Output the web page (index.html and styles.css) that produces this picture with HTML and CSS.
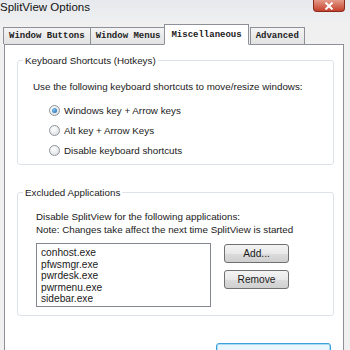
FILE: index.html
```html
<!DOCTYPE html>
<html lang="en">
<head>
  <meta charset="UTF-8">
  <title>SplitView Options</title>
  <link rel="stylesheet" href="styles.css">
</head>
<body>

  <div class="titlebar">
    <span class="title">SplitView Options</span>
    <span class="close">
      <svg width="10" height="8" viewBox="0 0 10 8"><path d="M1.5 0.5 L8.5 7.5 M8.5 0.5 L1.5 7.5" stroke="#fff" stroke-width="2"/></svg>
    </span>
  </div>

  <div class="tabs">
    <div class="tab">Window Buttons</div>
    <div class="tab">Window Menus</div>
    <div class="tab active">Miscellaneous</div>
    <div class="tab">Advanced</div>
  </div>

  <div class="panel">
    <fieldset class="group group-keys">
      <legend>Keyboard Shortcuts (Hotkeys)</legend>
      <p class="intro">Use the following keyboard shortcuts to move/resize windows:</p>
      <div class="radio checked"><span class="dot"></span>Windows key + Arrow keys</div>
      <div class="radio"><span class="dot"></span>Alt key + Arrow Keys</div>
      <div class="radio"><span class="dot"></span>Disable keyboard shortcuts</div>
    </fieldset>

    <fieldset class="group group-apps">
      <legend>Excluded Applications</legend>
      <p class="intro">Disable SplitView for the following applications:<br>
        Note: Changes take affect the next time SplitView is started</p>
      <div class="apps">
        <ul class="listbox">
          <li>conhost.exe</li>
          <li>pfwsmgr.exe</li>
          <li>pwrdesk.exe</li>
          <li>pwrmenu.exe</li>
          <li>sidebar.exe</li>
        </ul>
        <div class="buttons">
          <button class="btn">Add...</button>
          <button class="btn">Remove</button>
        </div>
      </div>
    </fieldset>

    <div class="footer">
      <button class="btn btn-focus"></button>
    </div>
  </div>

</body>
</html>
```

FILE: styles.css
```css
body {
  margin: 0;
  background: #f0f0f0;
  font-family: "Liberation Sans", Arial, sans-serif;
  font-size: 9.8px;
  color: #1a1a1a;
  height: 350px;
  overflow: hidden;
}

.titlebar {
  height: 24px;
  display: flex;
  justify-content: space-between;
  align-items: flex-start;
  background: linear-gradient(#e6e9ee, #f0f0f0);
}

.title {
  font-size: 11.5px;
  margin-top: 1px;
  color: #111;
}

.close {
  width: 32px;
  height: 12px;
  margin-right: 5px;
  background: linear-gradient(#e59a8a, #c5422d);
  border: 1px solid #8a2a1c;
  border-top: none;
  border-radius: 0 0 4px 4px;
  display: flex;
  justify-content: center;
  align-items: flex-end;
  padding-bottom: 1px;
  box-sizing: border-box;
}

.tabs {
  display: flex;
  align-items: flex-end;
  padding-left: 3px;
  height: 20px;
  position: relative;
  z-index: 1;
}

.tab {
  font-family: "Liberation Mono", "Courier New", monospace;
  font-weight: bold;
  font-size: 9px;
  height: 16px;
  line-height: 17px;
  padding: 0 5px;
  border: 1px solid #8e9098;
  border-bottom: none;
  margin-right: -1px;
  background: linear-gradient(#f4f4f4, #e2e2e2);
  color: #222;
}

.tab.active {
  height: 19px;
  line-height: 20px;
  background: #fff;
  margin: 0 1px -1px -1px;
  padding: 0 6px;
  border-bottom: 1px solid #fff;
}

.panel {
  background: #fff;
  border: 1px solid #8e9098;
  margin: 0 4px 0 4px;
  width: 340px;
  box-sizing: border-box;
  height: 320px;
  padding: 10px 9px 0 12px;
}

.group {
  margin: 0;
  border: 1px solid #dde3e8;
  border-radius: 3px;
  padding: 0 0 0 15px;
}

.group legend {
  padding: 0 2px;
  margin-left: -10px;
  color: #1a1a1a;
}

.group-keys {
  height: 108px;
}

.group-apps {
  margin-top: 22px;
  height: 127px;
}

.intro {
  margin: 14px 0 7px;
  line-height: 13px;
}

.group-apps .intro {
  margin: 12px 0 7px 3px;
}

.radio {
  display: flex;
  align-items: center;
  height: 20px;
  padding-left: 16px;
}

.dot {
  width: 11px;
  height: 11px;
  border-radius: 50%;
  border: 1px solid #8f959c;
  background: radial-gradient(circle at 40% 35%, #ffffff, #d6d9dd);
  margin-right: 4px;
  box-sizing: border-box;
  display: flex;
  align-items: center;
  justify-content: center;
}

.radio.checked .dot::after {
  content: "";
  width: 5px;
  height: 5px;
  border-radius: 50%;
  background: radial-gradient(circle at 35% 35%, #7ac4f5, #1f5f9e);
}

.apps {
  display: flex;
  align-items: flex-start;
  padding-left: 3px;
}

.listbox {
  list-style: none;
  margin: 0;
  padding: 3px 4px;
  width: 175px;
  height: 64px;
  box-sizing: border-box;
  border: 1px solid #828790;
  line-height: 11.5px;
  font-size: 10.2px;
}

.buttons {
  display: flex;
  flex-direction: column;
  gap: 7px;
  margin-left: 13px;
  margin-top: 1px;
}

.btn {
  width: 65px;
  height: 19px;
  padding: 0;
  border: 1px solid #707070;
  border-radius: 3px;
  background: linear-gradient(#f4f4f4 0%, #e8e8e8 50%, #dcdcdc 51%, #cfcfcf 100%);
  font-family: "Liberation Sans", Arial, sans-serif;
  font-size: 10.2px;
  color: #1a1a1a;
}

.footer {
  display: flex;
  justify-content: flex-end;
  margin-top: 27px;
  padding-right: 3px;
}

.btn-focus {
  width: 115px;
  height: 22px;
  border: 1px solid #3c9fd8;
  box-shadow: inset 0 0 0 1px #a8dcf7;
  background: #eaf6fd;
}
```
